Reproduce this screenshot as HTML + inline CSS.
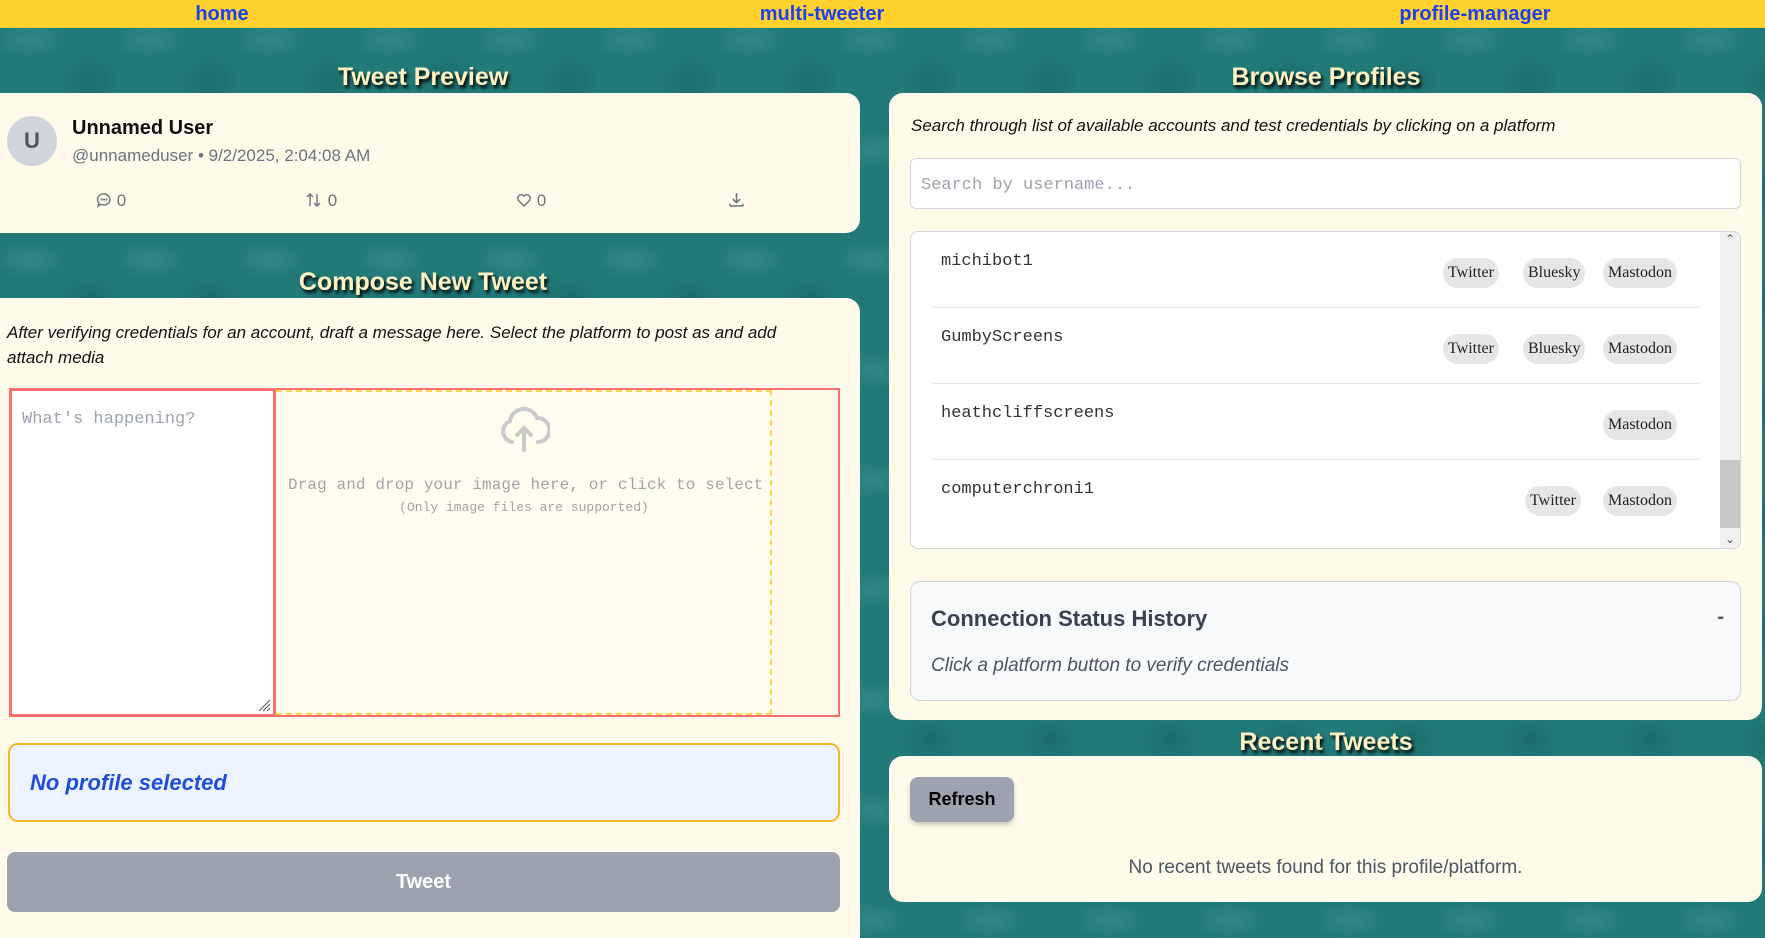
<!DOCTYPE html>
<html><head><meta charset="utf-8">
<style>
*{box-sizing:border-box;margin:0;padding:0}
body{width:1765px;height:922px;overflow:hidden;position:relative;font-family:"Liberation Sans",sans-serif;
background:#217a77;
background-image:radial-gradient(ellipse 40px 20px at 30px 40px,rgba(120,190,180,.2),transparent),radial-gradient(ellipse 30px 25px at 90px 80px,rgba(10,60,60,.2),transparent);
background-size:120px 110px;}
.a{position:absolute}
.nav{left:0;top:0;width:1765px;height:28px;background:#ffd22e}
.nav span{position:absolute;top:3px;font-weight:bold;font-size:20px;color:#1e40f0;transform:translateX(-50%)}
.title{font-weight:bold;font-size:25px;color:#fff3c4;text-shadow:2px 3px 3px #000;transform:translateX(-50%);white-space:nowrap}
.card{background:#fefbea;border-radius:14px}
.mono{font-family:"Liberation Mono",monospace}
.badge{position:absolute;height:30px;line-height:30px;background:#e6e6e9;border-radius:15px;font-family:"Liberation Serif",serif;font-size:16px;color:#222;padding:0 5px}
.row{position:absolute;left:20px;width:770px;height:76px;border-bottom:1px solid #e5e5e5}
.row .n{position:absolute;left:10px;top:20px;font-size:17px;color:#333}
</style></head><body>
<div class="a nav"><span style="left:222px">home</span><span style="left:822px">multi-tweeter</span><span style="left:1475px">profile-manager</span></div>

<div class="a title" style="left:423px;top:63px">Tweet Preview</div>
<div class="a card" style="left:0;top:93px;width:860px;height:140px;border-radius:0 14px 14px 0">
  <div class="a" style="left:7px;top:23px;width:50px;height:50px;border-radius:50%;background:#d1d5db;color:#4b5563;font-size:22px;font-weight:bold;text-align:center;line-height:50px">U</div>
  <div class="a" style="left:72px;top:24px;font-size:20px;font-weight:bold;color:#111">Unnamed User</div>
  <div class="a" style="left:72px;top:53px;font-size:17px;color:#6b7280">@unnameduser • 9/2/2025, 2:04:08 AM</div>
  <div class="a" style="left:96px;top:98px;font-size:17px;color:#6b7280">
    <svg width="16" height="16" viewBox="0 0 16 16" style="vertical-align:-2px" fill="none" stroke="#6b7280" stroke-width="1.4"><path d="M8 2a6 5.5 0 1 1-3 10.3L2 14l1-3A6 5.5 0 0 1 8 2z"/><circle cx="5.5" cy="7.5" r=".4"/><circle cx="8" cy="7.5" r=".4"/><circle cx="10.5" cy="7.5" r=".4"/></svg> 0</div>
  <div class="a" style="left:305px;top:98px;font-size:17px;color:#6b7280">
    <svg width="18" height="16" viewBox="0 0 18 16" style="vertical-align:-2px" fill="none" stroke="#6b7280" stroke-width="1.4"><path d="M5 14V2M2 5l3-3 3 3M12 2v12M9 11l3 3 3-3"/></svg> 0</div>
  <div class="a" style="left:516px;top:98px;font-size:17px;color:#6b7280">
    <svg width="16" height="16" viewBox="0 0 16 16" style="vertical-align:-2px" fill="none" stroke="#6b7280" stroke-width="1.4"><path d="M8 14L2.5 8.5A3.3 3.3 0 0 1 8 4a3.3 3.3 0 0 1 5.5 4.5z"/></svg> 0</div>
  <div class="a" style="left:728px;top:98px">
    <svg width="17" height="17" viewBox="0 0 16 16" fill="none" stroke="#6b7280" stroke-width="1.4"><path d="M8 2v9M4.5 7.5L8 11l3.5-3.5M2 12v2h12v-2"/></svg></div>
</div>

<div class="a title" style="left:423px;top:268px">Compose New Tweet</div>
<div class="a card" style="left:0;top:298px;width:860px;height:640px;border-radius:0 14px 0 0">
  <div class="a" style="left:7px;top:22px;width:820px;font-size:17px;font-style:italic;color:#111;line-height:25px">After verifying credentials for an account, draft a message here. Select the platform to post as and add attach media</div>
  <div class="a" style="left:9px;top:90px;width:831px;height:329px;border:2px solid #f87171"></div>
  <div class="a" style="left:9px;top:90px;width:267px;height:329px;border:3px solid #f87171;background:#fff;border-radius:3px">
    <div class="a mono" style="left:10px;top:19px;font-size:17px;color:#9ca3af">What's happening?</div>
    <svg class="a" style="right:2px;bottom:2px" width="14" height="14" viewBox="0 0 14 14" stroke="#555" stroke-width="1"><path d="M13 2L2 13M13 6L6 13M13 10L10 13"/></svg>
  </div>
  <div class="a" style="left:276px;top:92px;width:496px;height:325px;border:2px dashed #fcd34d;border-left:none;background:#fffcf0"></div>
  <svg class="a" style="left:498px;top:106px" width="52" height="48" viewBox="0 0 52 48" fill="none" stroke="#c9c9c9" stroke-width="4" stroke-linecap="round"><path d="M14 38A11 11 0 0 1 12 17 14 14 0 0 1 39 14 11 11 0 0 1 40 38"/><path d="M26 46V24M19 31l7-7 7 7"/></svg>
  <div class="a mono" style="left:288px;top:178px;font-size:16px;color:#a3a3a3;white-space:nowrap;letter-spacing:0.1px">Drag and drop your image here, or click to select</div>
  <div class="a mono" style="left:276px;width:496px;text-align:center;top:202px;font-size:13px;color:#a3a3a3">(Only image files are supported)</div>
  <div class="a" style="left:8px;top:445px;width:832px;height:79px;border:2px solid #f5b921;border-radius:10px;background:#eef4ff">
    <div class="a" style="left:20px;top:25px;font-size:22px;font-weight:bold;font-style:italic;color:#1d4ed8">No profile selected</div>
  </div>
  <div class="a" style="left:7px;top:554px;width:833px;height:60px;background:#9ca3af;border-radius:8px;color:#fff;font-size:20px;font-weight:bold;text-align:center;line-height:60px">Tweet</div>
</div>

<div class="a title" style="left:1326px;top:63px">Browse Profiles</div>
<div class="a card" style="left:889px;top:93px;width:873px;height:627px">
  <div class="a" style="left:22px;top:23px;font-size:17px;font-style:italic;color:#111">Search through list of available accounts and test credentials by clicking on a platform</div>
  <div class="a" style="left:21px;top:65px;width:831px;height:51px;border:1px solid #d1d5db;border-radius:6px;background:#fff">
    <div class="a mono" style="left:10px;top:17px;font-size:17px;color:#9ca3af">Search by username...</div>
  </div>
  <div class="a" style="left:21px;top:138px;width:831px;height:318px;border:1px solid #d1d5db;border-radius:8px;background:#fff;overflow:hidden">
    <div class="row" style="top:0"><div class="n mono">michibot1</div>
      <span class="badge" style="left:512px;top:26px">Twitter</span><span class="badge" style="left:592px;top:26px">Bluesky</span><span class="badge" style="left:672px;top:26px">Mastodon</span></div>
    <div class="row" style="top:76px"><div class="n mono">GumbyScreens</div>
      <span class="badge" style="left:512px;top:26px">Twitter</span><span class="badge" style="left:592px;top:26px">Bluesky</span><span class="badge" style="left:672px;top:26px">Mastodon</span></div>
    <div class="row" style="top:152px"><div class="n mono">heathcliffscreens</div>
      <span class="badge" style="left:672px;top:26px">Mastodon</span></div>
    <div class="row" style="top:228px;border:none"><div class="n mono">computerchroni1</div>
      <span class="badge" style="left:594px;top:26px">Twitter</span><span class="badge" style="left:672px;top:26px">Mastodon</span></div>
    <div class="a" style="right:0;top:0;width:20px;height:318px;background:#f1f1f1"></div>
    <div class="a" style="right:0;top:228px;width:20px;height:68px;background:#c8c8c8"></div>
    <div class="a" style="right:5px;top:0;font-size:12px;color:#555">&#8963;</div>
    <div class="a" style="right:5px;top:300px;font-size:12px;color:#555">&#8964;</div>
  </div>
  <div class="a" style="left:21px;top:488px;width:831px;height:120px;border:1px solid #d1d5db;border-radius:10px;background:#f8f9fb">
    <div class="a" style="left:20px;top:24px;font-size:22px;font-weight:bold;color:#374151">Connection Status History</div>
    <div class="a" style="right:16px;top:24px;font-size:20px;font-weight:bold;color:#555">-</div>
    <div class="a" style="left:20px;top:73px;font-size:19px;font-style:italic;color:#4b5563">Click a platform button to verify credentials</div>
  </div>
</div>

<div class="a title" style="left:1326px;top:728px">Recent Tweets</div>
<div class="a card" style="left:889px;top:756px;width:873px;height:146px">
  <div class="a" style="left:21px;top:21px;width:104px;height:45px;background:#9ca3af;border-radius:8px;box-shadow:0 3px 5px rgba(0,0,0,.2);font-size:18px;font-weight:bold;color:#000;text-align:center;line-height:45px">Refresh</div>
  <div class="a" style="left:0;width:873px;top:101px;text-align:center;font-size:19px;color:#4b5563">No recent tweets found for this profile/platform.</div>
</div>
</body></html>
